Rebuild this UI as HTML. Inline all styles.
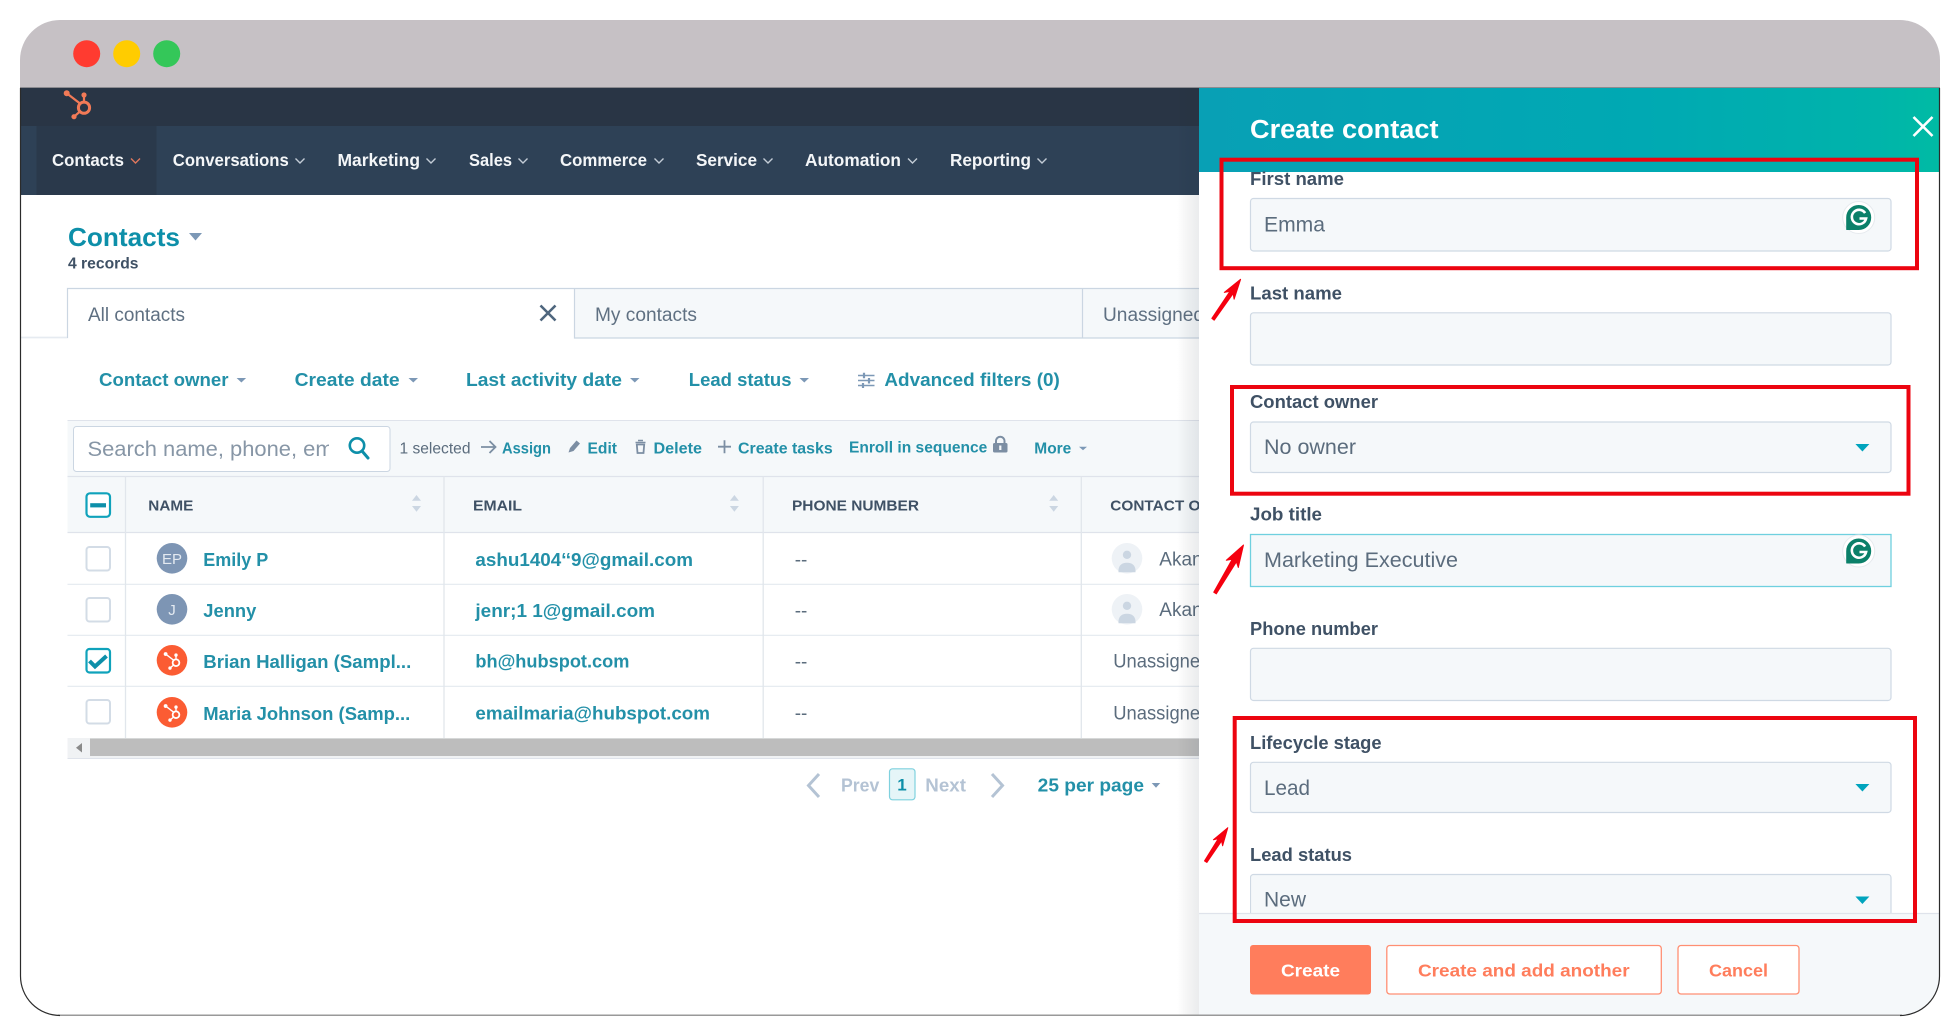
<!DOCTYPE html>
<html lang="en">
<head>
<meta charset="utf-8">
<title>Create contact</title>
<style>
html,body{margin:0;padding:0;background:#fff;width:1960px;height:1031px;overflow:hidden}
svg{display:block}
text{font-family:"Liberation Sans",Arial,sans-serif;white-space:pre}
.nav{font-size:17.5px;font-weight:700;fill:#f4f6f8}
.lab{font-size:18px;font-weight:700;fill:#3f5165}
.val{font-size:21px;fill:#5b6c7d}
.link{font-size:18.5px;font-weight:700;fill:#2390a8}
.act{font-size:16px;font-weight:700;fill:#2390a8}
.th{font-size:15px;font-weight:700;fill:#3f5165}
.name{font-size:18.5px;font-weight:700;fill:#2390a8}
.cell{font-size:19px;fill:#5b6c7d}
.tab{font-size:19px;fill:#5f7082}
.btn{font-size:17.5px;font-weight:700}
</style>
</head>
<body>
<svg xmlns="http://www.w3.org/2000/svg" width="1960" height="1031" viewBox="0 0 1960 1031">
<defs>
<clipPath id="win"><rect x="20" y="20" width="1920" height="996" rx="40" ry="40"/></clipPath>
<clipPath id="main"><rect x="20" y="88" width="1179" height="928"/></clipPath>
<clipPath id="srch"><rect x="80" y="430" width="249" height="38"/></clipPath>
<clipPath id="newc"><rect x="1250" y="870" width="642" height="43"/></clipPath>
<linearGradient id="hd" x1="0" y1="0" x2="1" y2="0">
<stop offset="0" stop-color="#08a0b5"/><stop offset=".6" stop-color="#00a9b3"/><stop offset=".9" stop-color="#00b3ab"/><stop offset="1" stop-color="#00bba4"/>
</linearGradient>
<linearGradient id="sh" x1="0" y1="0" x2="1" y2="0">
<stop offset="0" stop-color="#000" stop-opacity="0"/><stop offset="1" stop-color="#1a2a3a" stop-opacity=".09"/>
</linearGradient>
<g id="hub" fill="none" stroke-linecap="round">
<circle cx="0" cy="0" r="5.6" stroke-width="3"/>
<path d="M0-6V-12.7M-4-4.2L-17.3-14.4M-3.8 3.6L-10 9" stroke-width="2.2"/>
</g>
<g id="gram">
<circle cx="0" cy="0" r="16" fill="#fff" stroke="#e6eaee" stroke-width="1"/>
<path d="M-12 12V0A12 12 0 1 1 0 12Z" fill="#0b8069" stroke="#0b8069" stroke-linejoin="round"/>
<path d="M6.4-4.4A7.2 7.2 0 1 0 7.4 1H.8" fill="none" stroke="#fff" stroke-width="2.6"/>
</g>
<g id="person">
<circle cx="0" cy="0" r="15.3" fill="#eef2f6"/>
<circle cx="0" cy="-3.5" r="4.2" fill="#cbd6e2"/>
<path d="M-8.5 14C-9 7-5 4.5 0 4.5S9 7 8.5 14Z" fill="#cbd6e2"/>
</g>
<g id="sort" fill="#cbd6e2"><path d="M-4.5 5.7L0 0L4.5 5.7ZM-4.5 11L4.5 11L0 16.7Z"/></g>
</defs>

<rect width="1960" height="1031" fill="#fff"/>

<g clip-path="url(#win)">
<rect x="20" y="20" width="1920" height="68" fill="#c6c1c5"/>
<rect x="20" y="87" width="1920" height="1.5" fill="#8b8b90"/>
<circle cx="86.7" cy="53.7" r="13.5" fill="#ff3b30"/>
<circle cx="126.7" cy="53.7" r="13.5" fill="#ffcc00"/>
<circle cx="166.7" cy="53.7" r="13.5" fill="#34c759"/>

<g clip-path="url(#main)">
<rect x="20" y="88" width="1179" height="38" fill="#293545"/>
<rect x="20" y="126" width="1179" height="69" fill="#2e4156"/>
<rect x="36.5" y="126" width="120" height="69" fill="#2a394b"/>
<rect x="20" y="195" width="1179" height="821" fill="#fff"/>

<g transform="translate(84 107.7)" stroke="#f27a57" fill="#f27a57">
<use href="#hub"/>
<circle cx="0" cy="-12.7" r="2.6" stroke="none"/><circle cx="-17.3" cy="-14.4" r="3" stroke="none"/><circle cx="-10" cy="9" r="2.6" stroke="none"/>
</g>

<text class="nav" x="52" y="166" textLength="72" lengthAdjust="spacingAndGlyphs">Contacts</text>
<text class="nav" x="172.8" y="166" textLength="116" lengthAdjust="spacingAndGlyphs">Conversations</text>
<text class="nav" x="337.5" y="166" textLength="82.5" lengthAdjust="spacingAndGlyphs">Marketing</text>
<text class="nav" x="469" y="166" textLength="43" lengthAdjust="spacingAndGlyphs">Sales</text>
<text class="nav" x="560" y="166" textLength="87" lengthAdjust="spacingAndGlyphs">Commerce</text>
<text class="nav" x="696" y="166" textLength="61" lengthAdjust="spacingAndGlyphs">Service</text>
<text class="nav" x="805" y="166" textLength="96" lengthAdjust="spacingAndGlyphs">Automation</text>
<text class="nav" x="950" y="166" textLength="81" lengthAdjust="spacingAndGlyphs">Reporting</text>
<g fill="none" stroke="#c3ccd6" stroke-width="1.4">
<path d="M131 158.5l4.5 4.5 4.5-4.5" stroke="#e0775c"/>
<path d="M295.5 158.5l4.5 4.5 4.5-4.5M426.5 158.5l4.5 4.5 4.5-4.5M518.5 158.5l4.5 4.5 4.5-4.5M654.5 158.5l4.5 4.5 4.5-4.5M763.5 158.5l4.5 4.5 4.5-4.5M908 158.5l4.5 4.5 4.5-4.5M1037.5 158.5l4.5 4.5 4.5-4.5"/>
</g>

<text x="68" y="246" font-size="26" font-weight="700" fill="#0d8fa9" textLength="112" lengthAdjust="spacingAndGlyphs">Contacts</text>
<path d="M189 233h13l-6.5 7.5z" fill="#7c98b6"/>
<text x="68" y="268.5" font-size="15.5" font-weight="700" fill="#3f5165" textLength="70.5" lengthAdjust="spacingAndGlyphs">4 records</text>

<rect x="574.5" y="288" width="625" height="50" fill="#f5f8fa"/>
<path d="M20 337.5H67.5V288.5H574.5V338H1199M1082.5 288.5V338M574.5 288.5H1199" fill="none" stroke="#cbd6e2" stroke-width="1.2"/>
<path d="M20 337.5H67" fill="none" stroke="#e6ebf1" stroke-width="1.4"/>
<text class="tab" x="88" y="321" textLength="97" lengthAdjust="spacingAndGlyphs">All contacts</text>
<path d="M540.5 305.5l15 15M555.5 305.5l-15 15" fill="none" stroke="#4f667e" stroke-width="2.6"/>
<text class="tab" x="595" y="321" textLength="102" lengthAdjust="spacingAndGlyphs">My contacts</text>
<text class="tab" x="1103" y="321" textLength="101" lengthAdjust="spacingAndGlyphs">Unassigned</text>

<text class="link" x="99" y="386" textLength="129.5" lengthAdjust="spacingAndGlyphs">Contact owner</text>
<text class="link" x="294.6" y="386" textLength="105" lengthAdjust="spacingAndGlyphs">Create date</text>
<text class="link" x="466" y="386" textLength="156" lengthAdjust="spacingAndGlyphs">Last activity date</text>
<text class="link" x="688.8" y="386" textLength="102.7" lengthAdjust="spacingAndGlyphs">Lead status</text>
<text class="link" x="884.4" y="386" textLength="175.4" lengthAdjust="spacingAndGlyphs">Advanced filters (0)</text>
<path d="M236.6 378h9.5l-4.7 4.5zM408.5 378h9.5l-4.7 4.5zM630 378h9.5l-4.7 4.5zM799.5 378h9.5l-4.7 4.5z" fill="#7c98b6"/>
<path d="M858 375.5h16.5M858 380.5h16.5M858 385.5h16.5" stroke="#7c98b6" stroke-width="1.5" fill="none"/>
<path d="M864 372.7v5.5M869 378v5.5M863 383v5" stroke="#7c98b6" stroke-width="2.2" fill="none"/>

<rect x="67.5" y="420.5" width="1132" height="56" fill="#f5f8fa"/>
<path d="M67.5 420.5H1199" stroke="#dfe3eb" stroke-width="1" fill="none"/>
<rect x="73.5" y="426.5" width="316.5" height="45" rx="3" fill="#fff" stroke="#cbd6e2"/>
<g clip-path="url(#srch)"><text x="87.5" y="456" font-size="21px" fill="#8796a6" textLength="268" lengthAdjust="spacingAndGlyphs">Search name, phone, email</text></g>
<circle cx="357" cy="445.5" r="7.2" fill="none" stroke="#0d8fa9" stroke-width="2.6"/>
<path d="M362 451l6 7" stroke="#0d8fa9" stroke-width="3" stroke-linecap="round"/>

<text x="399.5" y="453.3" font-size="15.5" fill="#5b6c7d" textLength="71" lengthAdjust="spacingAndGlyphs">1 selected</text>
<path d="M481 447h14M489.5 441l6 6-6 6" fill="none" stroke="#7c8ea3" stroke-width="1.8"/>
<text class="act" x="502" y="453.5" textLength="49" lengthAdjust="spacingAndGlyphs">Assign</text>
<path d="M568.5 452.5l1.5-4.5 6.5-7.5 3.5 3-6.5 7.5z" fill="#7c8ea3"/>
<text class="act" x="587.5" y="453.5" textLength="29.5" lengthAdjust="spacingAndGlyphs">Edit</text>
<path d="M635.5 442.5h10M638 440.5h5" stroke="#7c8ea3" stroke-width="1.5" fill="none"/>
<path d="M636.8 444.5h7.4l-.7 8.5h-6z" fill="none" stroke="#7c8ea3" stroke-width="1.8"/>
<text class="act" x="653.5" y="453.5" textLength="48.5" lengthAdjust="spacingAndGlyphs">Delete</text>
<path d="M718 446.7h13M724.5 440.2v13" stroke="#7c8ea3" stroke-width="1.8" fill="none"/>
<text class="act" x="738" y="453.5" textLength="94.7" lengthAdjust="spacingAndGlyphs">Create tasks</text>
<text class="act" x="849" y="452.3" textLength="138.3" lengthAdjust="spacingAndGlyphs">Enroll in sequence</text>
<rect x="993" y="443" width="14.5" height="9.5" rx="1.5" fill="#7c8ea3"/>
<path d="M996 444v-3a4.2 4.2 0 0 1 8.5 0v3" fill="none" stroke="#7c8ea3" stroke-width="2"/>
<rect x="999.2" y="445.5" width="2.2" height="4.5" fill="#f5f8fa"/>
<text class="act" x="1034.3" y="453.3" textLength="37" lengthAdjust="spacingAndGlyphs">More</text>
<path d="M1079 446.7h8l-4 3.5z" fill="#7c98b6"/>

<rect x="67.5" y="476.5" width="1132" height="56" fill="#f5f8fa"/>
<path d="M67.5 476.5H1199M67.5 532.5H1199" stroke="#dfe3eb" stroke-width="1.2" fill="none"/>
<path d="M67.5 584.3H1199M67.5 635.3H1199M67.5 686.3H1199" stroke="#e4e9ef" stroke-width="1.1" fill="none"/>
<path d="M125.5 476.5V738M444 476.5V738M763.2 476.5V738M1081.3 476.5V738" stroke="#e1e6ec" stroke-width="1.3" fill="none"/>

<text class="th" x="148.3" y="510.5" textLength="45" lengthAdjust="spacingAndGlyphs">NAME</text>
<text class="th" x="473" y="510.5" textLength="49" lengthAdjust="spacingAndGlyphs">EMAIL</text>
<text class="th" x="792" y="510.5" textLength="127" lengthAdjust="spacingAndGlyphs">PHONE NUMBER</text>
<text class="th" x="1110.3" y="510.5" textLength="137" lengthAdjust="spacingAndGlyphs">CONTACT OWNER</text>
<use href="#sort" x="416.5" y="495"/>
<use href="#sort" x="734.4" y="495"/>
<use href="#sort" x="1053.7" y="495"/>

<rect x="86.5" y="493.3" width="23.5" height="23.5" rx="3.5" fill="#fff" stroke="#0fa2bb" stroke-width="2.2"/>
<rect x="90.2" y="503.2" width="15.8" height="4.2" fill="#0d8fa9"/>
<rect x="86.5" y="547" width="23.5" height="23.5" rx="3" fill="#fff" stroke="#d3dce6" stroke-width="2"/>
<rect x="86.5" y="598" width="23.5" height="23.5" rx="3" fill="#fff" stroke="#d3dce6" stroke-width="2"/>
<rect x="86.5" y="649" width="23.5" height="23.5" rx="3" fill="#fff" stroke="#0fa2bb" stroke-width="2.2"/>
<path d="M89.5 661l5.5 5.5 11.5-10.5" fill="none" stroke="#0d8fa9" stroke-width="4"/>
<rect x="86.5" y="700" width="23.5" height="23.5" rx="3" fill="#fff" stroke="#d3dce6" stroke-width="2"/>

<circle cx="172" cy="558.3" r="15.3" fill="#7d95b4"/>
<text x="172" y="563.8" font-size="15" fill="#e4eaf1" text-anchor="middle">EP</text>
<circle cx="172" cy="609.3" r="15.3" fill="#7d95b4"/>
<text x="172" y="614.8" font-size="15" fill="#e4eaf1" text-anchor="middle">J</text>
<circle cx="172" cy="660.3" r="15.3" fill="#fb5c33"/>
<g transform="translate(176 662.7) scale(.6)" stroke="#fff" fill="#fff"><use href="#hub"/><circle cx="0" cy="-12.7" r="2.8" stroke="none"/><circle cx="-17.3" cy="-14.4" r="3.2" stroke="none"/><circle cx="-10" cy="9" r="2.8" stroke="none"/></g>
<circle cx="172" cy="712.3" r="15.3" fill="#fb5c33"/>
<g transform="translate(176 714.7) scale(.6)" stroke="#fff" fill="#fff"><use href="#hub"/><circle cx="0" cy="-12.7" r="2.8" stroke="none"/><circle cx="-17.3" cy="-14.4" r="3.2" stroke="none"/><circle cx="-10" cy="9" r="2.8" stroke="none"/></g>

<text class="name" x="203.3" y="566" textLength="65" lengthAdjust="spacingAndGlyphs">Emily P</text>
<text class="name" x="203.3" y="617" textLength="53" lengthAdjust="spacingAndGlyphs">Jenny</text>
<text class="name" x="203.3" y="668" textLength="208" lengthAdjust="spacingAndGlyphs">Brian Halligan (Sampl...</text>
<text class="name" x="203.3" y="720" textLength="207" lengthAdjust="spacingAndGlyphs">Maria Johnson (Samp...</text>

<text class="name" x="475.4" y="566" textLength="217.6" lengthAdjust="spacingAndGlyphs">ashu1404‘‘9@gmail.com</text>
<text class="name" x="475.4" y="617" textLength="179.6" lengthAdjust="spacingAndGlyphs">jenr;1 1@gmail.com</text>
<text class="name" x="475.4" y="667.5" textLength="154" lengthAdjust="spacingAndGlyphs">bh@hubspot.com</text>
<text class="name" x="475.4" y="719.5" textLength="234.6" lengthAdjust="spacingAndGlyphs">emailmaria@hubspot.com</text>

<text class="cell" x="794.7" y="566" textLength="12.6" lengthAdjust="spacingAndGlyphs">--</text>
<text class="cell" x="794.7" y="617" textLength="12.6" lengthAdjust="spacingAndGlyphs">--</text>
<text class="cell" x="794.7" y="668" textLength="12.6" lengthAdjust="spacingAndGlyphs">--</text>
<text class="cell" x="794.7" y="719.5" textLength="12.6" lengthAdjust="spacingAndGlyphs">--</text>

<use href="#person" x="1127" y="558.3"/>
<use href="#person" x="1127" y="609.3"/>
<text class="cell" x="1159.3" y="565.5">Akanksha</text>
<text class="cell" x="1159.3" y="616">Akanksha</text>
<text class="cell" x="1113.3" y="667.5" textLength="97" lengthAdjust="spacingAndGlyphs">Unassigned</text>
<text class="cell" x="1113.3" y="719.5" textLength="97" lengthAdjust="spacingAndGlyphs">Unassigned</text>

<rect x="67.5" y="738" width="1132" height="20" fill="#f0f2f4"/>
<rect x="90" y="738.5" width="1110" height="17.5" fill="#bdbdbd"/>
<path d="M82 743v9.5l-6-4.7z" fill="#8a8a8a"/>
<path d="M67.5 758.5H1199" stroke="#dfe3eb" stroke-width="1"/>

<path d="M819 774l-10.5 11.5 10.5 11.5" fill="none" stroke="#b4c3d4" stroke-width="3"/>
<text x="841" y="791.7" font-size="18.5" font-weight="700" fill="#b4c3d4" textLength="38.3" lengthAdjust="spacingAndGlyphs">Prev</text>
<rect x="889.5" y="768.8" width="25.5" height="31" rx="3" fill="#e5f5f8" stroke="#7fd1de" stroke-width="1.2"/>
<text x="902" y="790.5" font-size="17" font-weight="700" fill="#0d8fa9" text-anchor="middle">1</text>
<text x="925.3" y="791.7" font-size="18.5" font-weight="700" fill="#b4c3d4" textLength="40.7" lengthAdjust="spacingAndGlyphs">Next</text>
<path d="M992 774l10.5 11.5-10.5 11.5" fill="none" stroke="#b4c3d4" stroke-width="3"/>
<text class="link" x="1037.7" y="791.7" textLength="106.3" lengthAdjust="spacingAndGlyphs">25 per page</text>
<path d="M1151.7 783h8.5l-4.2 4.7z" fill="#7c98b6"/>

<rect x="1177" y="88" width="22" height="928" fill="url(#sh)"/>
</g>

<rect x="1199" y="88" width="741" height="928" fill="#fff"/>
<rect x="1199" y="88" width="741" height="84" fill="url(#hd)"/>
<text x="1250" y="138" font-size="25.5" font-weight="700" fill="#fff" textLength="188.5" lengthAdjust="spacingAndGlyphs">Create contact</text>
<path d="M1913.5 117l19 19M1932.5 117l-19 19" fill="none" stroke="#fff" stroke-width="2.6"/>

<text class="lab" x="1250" y="185" textLength="94" lengthAdjust="spacingAndGlyphs">First name</text>
<rect x="1250.5" y="198.5" width="640.5" height="52.5" rx="3" fill="#f5f8fa" stroke="#cfd9e4" stroke-width="1.2"/>
<text class="val" x="1264" y="231.7" textLength="61" lengthAdjust="spacingAndGlyphs">Emma</text>
<use href="#gram" x="1858.7" y="217.5"/>

<text class="lab" x="1250" y="299.3" textLength="92" lengthAdjust="spacingAndGlyphs">Last name</text>
<rect x="1250.5" y="312.8" width="640.5" height="52.2" rx="3" fill="#f5f8fa" stroke="#cfd9e4" stroke-width="1.2"/>

<text class="lab" x="1250" y="408" textLength="128" lengthAdjust="spacingAndGlyphs">Contact owner</text>
<rect x="1250.5" y="422" width="640.5" height="50.5" rx="3" fill="#f5f8fa" stroke="#cfd9e4" stroke-width="1.2"/>
<text class="val" x="1264" y="454" textLength="92" lengthAdjust="spacingAndGlyphs">No owner</text>
<path d="M1855.4 444h14l-7 7.5z" fill="#00a4bd"/>

<text class="lab" x="1250" y="520.7" textLength="72" lengthAdjust="spacingAndGlyphs">Job title</text>
<rect x="1250.5" y="534.5" width="640.5" height="52" fill="#f5f8fa" stroke="#6fd0df" stroke-width="1.3"/>
<text class="val" x="1264" y="567" textLength="194" lengthAdjust="spacingAndGlyphs">Marketing Executive</text>
<use href="#gram" x="1858.7" y="551"/>

<text class="lab" x="1250" y="635" textLength="128" lengthAdjust="spacingAndGlyphs">Phone number</text>
<rect x="1250.5" y="648.3" width="640.5" height="52.2" rx="3" fill="#f5f8fa" stroke="#cfd9e4" stroke-width="1.2"/>

<text class="lab" x="1250" y="749" textLength="131.6" lengthAdjust="spacingAndGlyphs">Lifecycle stage</text>
<rect x="1250.5" y="762.3" width="640.5" height="50.2" rx="3" fill="#f5f8fa" stroke="#cfd9e4" stroke-width="1.2"/>
<text class="val" x="1264" y="795" textLength="46" lengthAdjust="spacingAndGlyphs">Lead</text>
<path d="M1855.4 784h14l-7 7.5z" fill="#00a4bd"/>

<text class="lab" x="1250" y="861" textLength="102" lengthAdjust="spacingAndGlyphs">Lead status</text>
<g clip-path="url(#newc)">
<rect x="1250.5" y="874.5" width="640.5" height="60" rx="3" fill="#f5f8fa" stroke="#cfd9e4" stroke-width="1.2"/>
<text class="val" x="1264" y="906.7" textLength="42" lengthAdjust="spacingAndGlyphs">New</text>
<path d="M1855.4 896.5h14l-7 7.5z" fill="#00a4bd"/>
</g>

<rect x="1199" y="913" width="741" height="103" fill="#f5f8fa"/>
<path d="M1199 913.5H1940" stroke="#dfe3eb" stroke-width="1.2"/>
<rect x="1250" y="945" width="121" height="49.5" rx="3" fill="#ff7d5c"/>
<text class="btn" x="1281" y="976.7" fill="#fff" textLength="59" lengthAdjust="spacingAndGlyphs">Create</text>
<rect x="1386.8" y="945.5" width="274.5" height="48.5" rx="3" fill="#fff" stroke="#ff8f73" stroke-width="1.3"/>
<text class="btn" x="1418" y="976.7" fill="#ff7d5c" textLength="211.6" lengthAdjust="spacingAndGlyphs">Create and add another</text>
<rect x="1678" y="945.5" width="121" height="48.5" rx="3" fill="#fff" stroke="#ff8f73" stroke-width="1.3"/>
<text class="btn" x="1709" y="976.7" fill="#ff7d5c" textLength="59" lengthAdjust="spacingAndGlyphs">Cancel</text>

<rect x="58" y="1014.5" width="1844" height="2" fill="#999"/>
</g>

<path d="M20.5 88V976A39.5 39.5 0 0 0 60 1015.5M1900 1015.5A39.5 39.5 0 0 0 1939.5 976V88" fill="none" stroke="#2b2b2b" stroke-width="1.2"/>

<g fill="none" stroke="#ec0410" stroke-width="4">
<rect x="1221.5" y="159.7" width="695.5" height="108.5"/>
<rect x="1232" y="387" width="676.5" height="106.7"/>
<rect x="1234.7" y="718" width="680.3" height="203"/>
</g>

<g fill="#f5000f" stroke="#f5000f" stroke-width="1" stroke-linejoin="round">
<polygon points="1211.8,318.4 1229.9,291.4 1224.3,292.4 1240.6,279.3 1234.1,299.2 1233.1,293.6 1214.2,320.2"/>
<polygon points="1213.7,592.2 1232.2,559.2 1226.3,560.3 1243.5,545 1238.3,567.5 1236.4,561.8 1216.3,593.8"/>
<polygon points="1204.5,860.9 1218.2,838.8 1213.4,839.8 1227.8,827.7 1222.6,845.8 1221.6,841 1206.9,862.5"/>
</g>
</svg>
</body>
</html>
